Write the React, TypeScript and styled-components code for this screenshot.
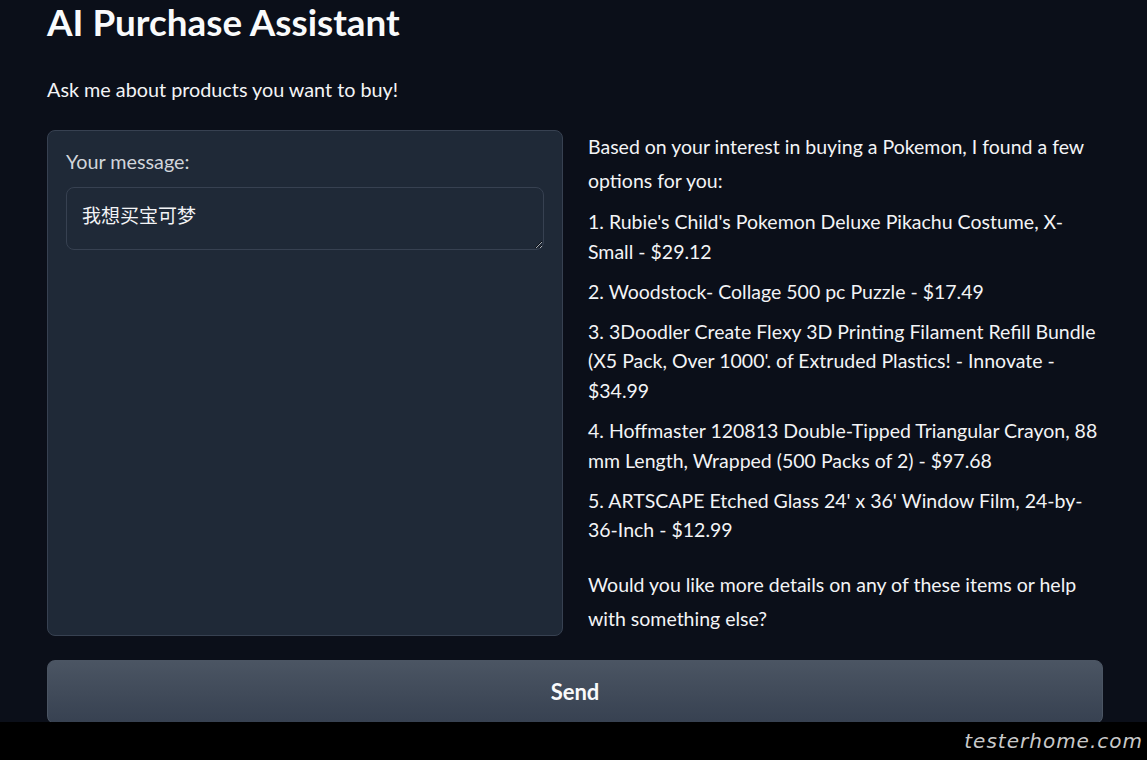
import React from "react"
import styled, { createGlobalStyle } from "styled-components"

const GlobalStyle = createGlobalStyle`
  html, body {
    margin: 0;
    padding: 0;
    background: #0b0f19;
    font-family: Lato, "Noto Sans", "Noto Sans CJK SC", sans-serif;
    color: #f3f4f6;
  }
`

const Page = styled.div`
  height: 760px;
  display: flex;
  flex-direction: column;
  overflow: hidden;
`

const Main = styled.main`
  height: 722px;
  overflow: hidden;
  padding: 0 44px 0 47px;
  box-sizing: border-box;
`

const Title = styled.h1`
  margin: 0;
  padding-top: 1px;
  font-size: 36.8px;
  line-height: 42px;
  font-weight: 700;
  color: #f9fafb;
`

const Subtitle = styled.p`
  margin: 32px 0 0;
  font-size: 19.8px;
  line-height: 28px;
  color: #f3f4f6;
`

const Columns = styled.div`
  margin-top: 27px;
  display: grid;
  grid-template-columns: 516px 516px;
  gap: 24px;
  width: 1056px;
`

const Panel = styled.div`
  background: #1f2937;
  border: 1px solid #374151;
  border-radius: 8px;
  padding: 16px 18px;
  box-sizing: border-box;
`

const Label = styled.label`
  display: block;
  font-size: 19.8px;
  line-height: 28px;
  color: #d1d5db;
  margin-bottom: 12px;
`

const Input = styled.textarea`
  display: block;
  width: 100%;
  height: 63px;
  box-sizing: border-box;
  background: #1f2937;
  border: 1px solid #374151;
  border-radius: 8px;
  padding: 14px 15px;
  font-family: Lato, "Noto Sans CJK SC", sans-serif;
  font-size: 19px;
  line-height: 28px;
  color: #f3f4f6;
  outline: none;
  resize: vertical;
`

const Answer = styled.div`
  padding-left: 1px;
  font-size: 19.5px;
  color: #f3f4f6;
`

const Para = styled.p`
  margin: 0 0 9px;
  line-height: 34px;
`

const Item = styled.p`
  margin: 0 0 10.5px;
  line-height: 29.6px;
`

const Closing = styled(Para)`
  margin: 23px 0 0;
`

const SendButton = styled.button`
  margin-top: 24px;
  width: 1056px;
  height: 64px;
  border: 1px solid #4b5563;
  border-radius: 8px;
  background: linear-gradient(to bottom, #4b5563, #374151);
  color: #f9fafb;
  font-family: Lato, "Noto Sans", sans-serif;
  font-size: 22px;
  font-weight: 700;
  cursor: pointer;
`

const Footer = styled.footer`
  height: 38px;
  background: #000;
  display: flex;
  justify-content: flex-end;
  align-items: center;
  padding-right: 4px;
`

const Watermark = styled.span`
  font-family: "DejaVu Sans", sans-serif;
  font-weight: 200;
  font-size: 20px;
  letter-spacing: 1px;
  color: #c9c9c9;
  font-style: italic;
`

const items = [
  "1. Rubie's Child's Pokemon Deluxe Pikachu Costume, X-Small - $29.12",
  "2. Woodstock- Collage 500 pc Puzzle - $17.49",
  "3. 3Doodler Create Flexy 3D Printing Filament Refill Bundle (X5 Pack, Over 1000'. of Extruded Plastics! - Innovate - $34.99",
  "4. Hoffmaster 120813 Double-Tipped Triangular Crayon, 88 mm Length, Wrapped (500 Packs of 2) - $97.68",
  "5. ARTSCAPE Etched Glass 24' x 36' Window Film, 24-by-36-Inch - $12.99",
]

export default function App() {
  return (
    <Page>
      <GlobalStyle />
      <Main>
        <Title>AI Purchase Assistant</Title>
        <Subtitle>Ask me about products you want to buy!</Subtitle>
        <Columns>
          <Panel>
            <Label>Your message:</Label>
            <Input defaultValue="我想买宝可梦" />
          </Panel>
          <Answer>
            <Para>
              Based on your interest in buying a Pokemon, I found a few options for you:
            </Para>
            {items.map((text) => (
              <Item key={text}>{text}</Item>
            ))}
            <Closing>
              Would you like more details on any of these items or help with something else?
            </Closing>
          </Answer>
        </Columns>
        <SendButton>Send</SendButton>
      </Main>
      <Footer>
        <Watermark>testerhome.com</Watermark>
      </Footer>
    </Page>
  )
}
